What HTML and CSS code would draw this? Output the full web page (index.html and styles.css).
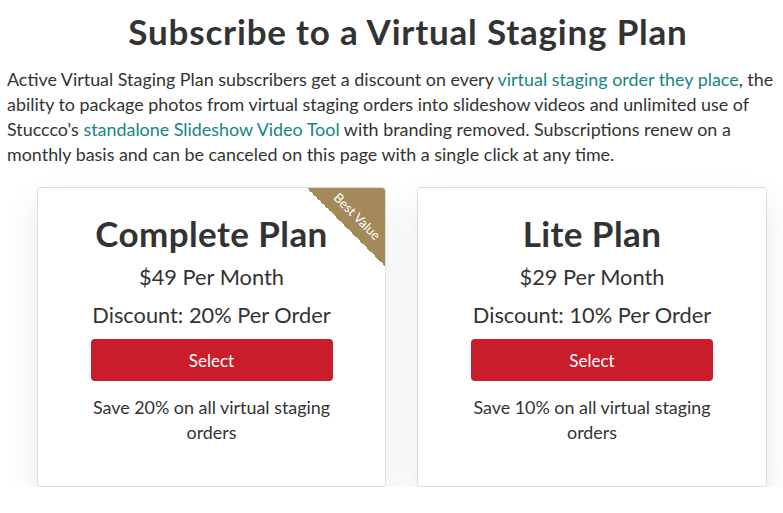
FILE: index.html
```html
<!DOCTYPE html>
<html lang="en">
<head>
<meta charset="utf-8">
<title>Subscribe to a Virtual Staging Plan</title>
<link rel="stylesheet" href="styles.css">
</head>
<body>
<div class="page">
  <h1 class="title">Subscribe to a Virtual Staging Plan</h1>
  <p class="intro">Active Virtual Staging Plan subscribers get a discount on every <a href="#">virtual staging order they place</a>, the ability to package photos from virtual staging orders into slideshow videos and unlimited use of Stuccco's <a href="#">standalone Slideshow Video Tool</a> with branding removed. Subscriptions renew on a monthly basis and can be canceled on this page with a single click at any time.</p>
  <div class="plans">
    <div class="plan">
      <div class="ribbon"><span class="ribbon-text">Best Value</span></div>
      <h2 class="plan-name">Complete Plan</h2>
      <div class="plan-price">$49 Per Month</div>
      <div class="plan-discount">Discount: 20% Per Order</div>
      <button class="select-btn">Select</button>
      <p class="plan-note">Save 20% on all virtual staging orders</p>
    </div>
    <div class="plan">
      <h2 class="plan-name">Lite Plan</h2>
      <div class="plan-price">$29 Per Month</div>
      <div class="plan-discount">Discount: 10% Per Order</div>
      <button class="select-btn">Select</button>
      <p class="plan-note">Save 10% on all virtual staging orders</p>
    </div>
  </div>
</div>
</body>
</html>
```
FILE: styles.css
```css
html, body {
  margin: 0;
  padding: 0;
  background: #ffffff;
  overflow: hidden;
}
body {
  font-family: Lato, "Liberation Sans", sans-serif;
  color: #333333;
}
.page {
  width: 816px;
  box-sizing: border-box;
  padding: 0 7px;
}
.title {
  margin: 0;
  padding-top: 12px;
  font-size: 35px;
  line-height: 38px;
  font-weight: 700;
  letter-spacing: 0.8px;
  text-align: center;
  color: #333333;
}
.intro {
  margin: 17px 24px 0 0;
  font-size: 17.9px;
  line-height: 25px;
  color: #333333;
}
.intro a {
  color: #16857f;
  text-decoration: none;
}
.plans {
  display: flex;
  gap: 31px;
  padding-left: 30px;
  margin-top: 20px;
}
.plan {
  position: relative;
  overflow: hidden;
  width: 349px;
  height: 300px;
  box-sizing: border-box;
  border: 1px solid #dddddd;
  border-radius: 4px;
  background: #ffffff;
  box-shadow: 0 14px 34px rgba(0, 0, 0, 0.09);
  padding: 24px 50px 0;
  text-align: center;
}
.plan + .plan {
  width: 350px;
}
.plan-name {
  margin: 0;
  font-size: 35px;
  line-height: 42px;
  font-weight: 700;
  letter-spacing: 0.4px;
  color: #333333;
}
.plan-price {
  margin-top: 5px;
  font-size: 21.8px;
  line-height: 36px;
}
.plan-discount {
  font-size: 21.8px;
  line-height: 39px;
}
.select-btn {
  display: block;
  width: 242px;
  height: 42px;
  margin: 5px auto 0;
  border: none;
  border-radius: 4px;
  background: #c91d2b;
  color: #ffffff;
  font-family: inherit;
  font-size: 17px;
  cursor: pointer;
}
.plan-note {
  margin: 14px 0 0;
  font-size: 17.9px;
  line-height: 25px;
}
.ribbon {
  position: absolute;
  top: 0;
  right: 0;
  width: 78px;
  height: 78px;
  background: linear-gradient(to bottom left, #a48a5a 50%, transparent 50%);
}
.ribbon-text {
  position: absolute;
  top: 21px;
  right: -14px;
  width: 84px;
  transform: rotate(45deg);
  font-size: 13px;
  line-height: 15px;
  color: #ffffff;
  text-align: center;
}
```
